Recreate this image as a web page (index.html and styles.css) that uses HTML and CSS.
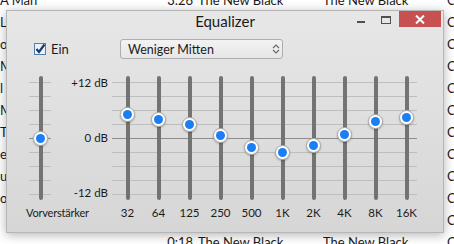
FILE: index.html
```html
<!DOCTYPE html>
<html lang="de">
<head>
    <meta charset="UTF-8">
    <meta name="viewport" content="width=device-width, initial-scale=1.0">
    <title>Equalizer</title>
    <link rel="stylesheet" href="styles.css">
</head>
<body>
    <!-- song list behind the window -->
    <div class="tracklist">
        <div class="row"><span class="c-title">A Man</span><span class="c-time">3:26</span><span class="c-artist">The New Black</span><span class="c-album">The New Black</span><span class="c-genre">Country</span></div>
        <div class="row"><span class="c-title">Li</span><span class="c-genre">Country</span></div>
        <div class="row"><span class="c-title">o</span><span class="c-genre">Country</span></div>
        <div class="row"><span class="c-title">M</span><span class="c-genre">Country</span></div>
        <div class="row"><span class="c-title">l</span><span class="c-genre">Country</span></div>
        <div class="row"><span class="c-title">M</span><span class="c-genre">Country</span></div>
        <div class="row"><span class="c-title">Th</span><span class="c-genre">Country</span></div>
        <div class="row"><span class="c-title">e</span><span class="c-genre">Country</span></div>
        <div class="row"><span class="c-title">us</span><span class="c-genre">Country</span></div>
        <div class="row"><span class="c-title">o</span><span class="c-genre">Country</span></div>
        <div class="row"><span class="c-title"></span><span class="c-genre">Country</span></div>
        <div class="row"><span class="c-title"></span><span class="c-time">0:18</span><span class="c-artist">The New Black</span><span class="c-album">The New Black</span><span class="c-genre">Country</span></div>
    </div>

    <div class="window">
        <div class="titlebar">
            <span class="title">Equalizer</span>
            <div class="controls">
                <span class="btn-min"></span>
                <span class="btn-max"></span>
                <span class="btn-close">
                    <svg width="10" height="9" viewBox="0 0 10 9"><path d="M1 0.5 L9 8.5 M9 0.5 L1 8.5" stroke="#fff" stroke-width="2"/></svg>
                </span>
            </div>
        </div>

        <div class="toolbar">
            <label class="toggle">
                <svg width="12" height="12" viewBox="0 0 12 12">
                    <rect x="0.5" y="0.5" width="11" height="11" fill="#e9f1fa" stroke="#4f7fb0"/>
                    <path d="M2.5 6 L5 9 L10.5 1.5" fill="none" stroke="#1e3a66" stroke-width="2.2"/>
                </svg>
                <span>Ein</span>
            </label>
            <div class="preset">
                <span>Weniger Mitten</span>
                <svg width="8" height="10" viewBox="0 0 8 10"><path d="M1 4 L4 1 L7 4 M1 6 L4 9 L7 6" fill="none" stroke="#6a6a6a" stroke-width="1.2"/></svg>
            </div>
        </div>

        <div class="eq">
            <div class="preamp">
                <div class="slider">
                    <div class="track"></div>
                    <div class="knob" style="top: 55px"></div>
                </div>
                <div class="label">Vorverstärker</div>
            </div>
            <div class="scale">
                <span>+12 dB</span>
                <span>0 dB</span>
                <span>-12 dB</span>
            </div>
            <div class="bands">
                <div class="col"><div class="slider"><div class="track"></div><div class="knob" style="top: 31px"></div></div><div class="label">32</div></div>
                <div class="col"><div class="slider"><div class="track"></div><div class="knob" style="top: 36px"></div></div><div class="label">64</div></div>
                <div class="col"><div class="slider"><div class="track"></div><div class="knob" style="top: 41px"></div></div><div class="label">125</div></div>
                <div class="col"><div class="slider"><div class="track"></div><div class="knob" style="top: 52px"></div></div><div class="label">250</div></div>
                <div class="col"><div class="slider"><div class="track"></div><div class="knob" style="top: 64px"></div></div><div class="label">500</div></div>
                <div class="col"><div class="slider"><div class="track"></div><div class="knob" style="top: 69px"></div></div><div class="label">1K</div></div>
                <div class="col"><div class="slider"><div class="track"></div><div class="knob" style="top: 62px"></div></div><div class="label">2K</div></div>
                <div class="col"><div class="slider"><div class="track"></div><div class="knob" style="top: 51px"></div></div><div class="label">4K</div></div>
                <div class="col"><div class="slider"><div class="track"></div><div class="knob" style="top: 38px"></div></div><div class="label">8K</div></div>
                <div class="col"><div class="slider"><div class="track"></div><div class="knob" style="top: 34px"></div></div><div class="label">16K</div></div>
            </div>
        </div>
    </div>
</body>
</html>
```

FILE: styles.css
```css
body {
    margin: 0;
    width: 454px;
    height: 244px;
    overflow: hidden;
    position: relative;
    background: #fff;
    color: #1b1b1b;
    font-family: 'Lato', 'Noto Sans', sans-serif;
}

/* background list */
.tracklist {
    margin-top: -11px;
}
.row {
    display: flex;
    align-items: center;
    height: 22px;
    font-size: 13px;
    white-space: nowrap;
}
.c-title {
    width: 166px;
    overflow: hidden;
}
.c-time {
    width: 27px;
    text-align: right;
}
.c-artist {
    width: 125px;
    margin-left: 5px;
}
.c-album {
    width: 124px;
}
.c-genre {
    margin-left: auto;
    width: 7px;
    overflow: hidden;
}

/* equalizer window */
.window {
    position: absolute;
    left: 6px;
    top: 10px;
    width: 438px;
    height: 223px;
    box-sizing: border-box;
    border: 1px solid #b6b6b6;
    background: linear-gradient(#e7e7e7, #d6d6d6);
    box-shadow: 0 2px 10px rgba(0,0,0,0.3);
}
.titlebar {
    position: relative;
    height: 20px;
    display: flex;
    justify-content: center;
    align-items: center;
}
.title {
    font-size: 15px;
    line-height: 20px;
    color: #1a1a1a;
}
.controls {
    position: absolute;
    top: 0;
    right: 2px;
    display: flex;
    align-items: flex-start;
}
.btn-min {
    width: 8px;
    height: 2px;
    margin-top: 10px;
    background: #505050;
}
.btn-max {
    width: 10px;
    height: 8px;
    margin-top: 5px;
    margin-left: 16px;
    box-sizing: border-box;
    border: 1px solid #505050;
    border-top-width: 2px;
}
.btn-close {
    width: 42px;
    height: 16px;
    margin-left: 8px;
    background: #c75050;
    display: flex;
    align-items: center;
    justify-content: center;
}

.toolbar {
    display: flex;
    align-items: center;
    height: 20px;
    padding: 8px 0 0 27px;
}
.toggle {
    width: 86px;
    display: flex;
    align-items: center;
    font-size: 13px;
}
.toggle span {
    margin-left: 5px;
}
.preset {
    width: 163px;
    height: 20px;
    box-sizing: border-box;
    border: 1px solid #adadad;
    border-radius: 3px;
    background: linear-gradient(#f3f3f3, #e6e6e6);
    display: flex;
    align-items: center;
    justify-content: space-between;
    padding: 0 2px 0 7px;
    font-size: 12.5px;
}

.eq {
    display: flex;
    margin-top: 17px;
    padding-left: 16px;
}
.preamp {
    width: 36px;
}
.slider {
    position: relative;
    height: 124px;
    background-image:
        linear-gradient(#8d8d8d, #8d8d8d),
        repeating-linear-gradient(to bottom, #bebebe 0 1px, transparent 1px 14px);
    background-size: 100% 1px, 100% 113px;
    background-position: 0 62px, 0 6px;
    background-repeat: no-repeat;
}
.preamp .slider {
    background-size: 22px 1px, 22px 113px;
    background-position: 6px 62px, 6px 6px;
}
.col:last-child .slider {
    background-size: 26px 1px, 26px 113px;
}
.track {
    width: 4px;
    height: 124px;
    margin-left: 14px;
    border-radius: 2px;
    background: #737373;
}
.preamp .track {
    margin-left: 16px;
}
.knob {
    position: absolute;
    left: 8px;
    width: 15px;
    height: 15px;
    box-sizing: border-box;
    border: 1px solid #a8a8a8;
    border-radius: 50%;
    background: #fff;
    box-shadow: 0 1px 2px rgba(0,0,0,0.25);
}
.knob::after {
    content: '';
    position: absolute;
    left: 2px;
    top: 2px;
    width: 9px;
    height: 9px;
    border-radius: 50%;
    background: #1b7ef4;
}
.preamp .knob {
    left: 10px;
}
.label {
    margin-top: 6px;
    font-size: 11.5px;
    line-height: 14px;
    text-align: center;
    white-space: nowrap;
}
.preamp .label {
    width: 80px;
    margin-left: 3px;
    text-align: left;
    font-size: 11px;
    letter-spacing: -0.2px;
}
.scale {
    width: 49px;
    height: 124px;
    padding-right: 1px;
    display: flex;
    flex-direction: column;
    justify-content: space-between;
    align-items: flex-end;
    font-size: 11.5px;
    line-height: 14px;
}
.bands {
    display: flex;
    margin-left: 3px;
}
.col {
    width: 31px;
}
```
